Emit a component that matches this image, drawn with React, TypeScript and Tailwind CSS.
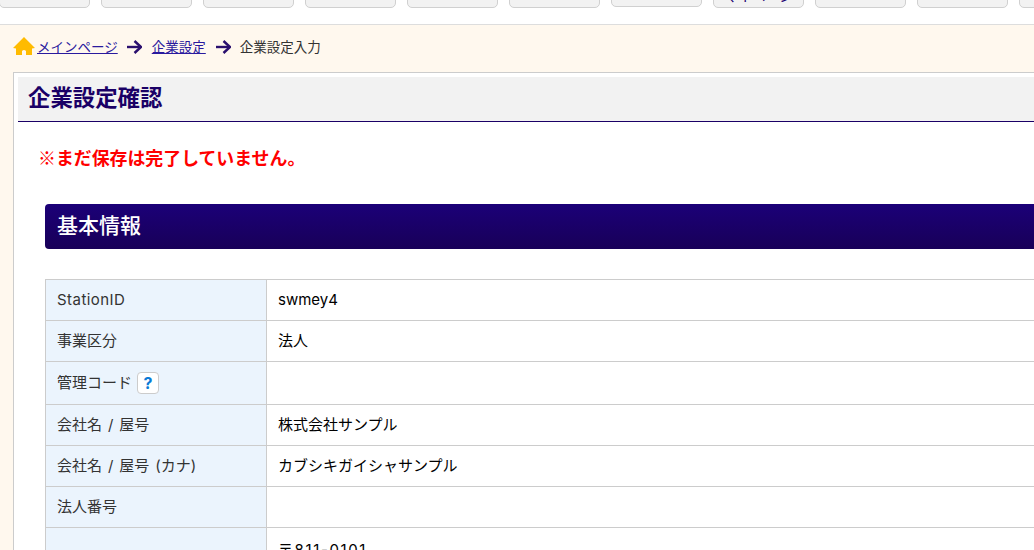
const fontStack = 'font-["Inter","Noto_Sans_CJK_JP",sans-serif]';

const navLabels = ['', '', '', '', '', '', '', 'マイページ', '', '', ''];

const rows: { label: string; value: string; help?: boolean; tall?: boolean }[] = [
  { label: 'StationID', value: 'swmey4' },
  { label: '事業区分', value: '法人' },
  { label: '管理コード', value: '', help: true, tall: true },
  { label: '会社名 / 屋号', value: '株式会社サンプル' },
  { label: '会社名 / 屋号 (カナ)', value: 'カブシキガイシャサンプル' },
  { label: '法人番号', value: '' },
];

function HomeIcon() {
  return (
    <svg width="22" height="18" viewBox="0 0 22 18" className="mb-[2px] shrink-0">
      <path d="M11 0 L22 11 L19 11.5 L19 18 L13 18 L13 14 Q11 12 9 14 L9 18 L3 18 L3 11.5 L0 11 Z" fill="#ffbb00" />
    </svg>
  );
}

function Arrow() {
  return (
    <svg width="15" height="14" viewBox="0 0 15 14" className="shrink-0" fill="none" stroke="#2a0f6e" strokeWidth="2.4">
      <path d="M0 7 H13" />
      <path d="M7.5 1 L14 7 L7.5 13" />
    </svg>
  );
}

export default function App() {
  return (
    <div className={`h-[550px] w-[1034px] overflow-hidden bg-white ${fontStack}`}>
      {/* top nav, buttons are cut by the window */}
      <div className="flex h-[25px] items-end gap-[11px] overflow-hidden border-b border-[#dddddd] pb-[16px]">
        {navLabels.map((label, i) => (
          <div
            key={i}
            className={`flex h-[40px] w-[91px] shrink-0 items-end justify-center rounded-[5px] border border-[#d0d0d0] bg-[#f2f2f2] pb-[4px] text-[14px] leading-[14px] text-[#1a0070] ${i === 0 ? '-ml-[1px]' : ''} ${i === 6 ? 'mb-[1px]' : ''}`}
          >
            {label}
          </div>
        ))}
      </div>

      {/* breadcrumb */}
      <div className="flex h-[47px] items-center bg-[#fff8ee] pb-[3px] pl-[13px] text-[13.5px]">
        <HomeIcon />
        <a className="ml-[2px] text-[#2a1a9e] underline">メインページ</a>
        <span className="ml-[9px]"><Arrow /></span>
        <a className="ml-[10px] text-[#2a1a9e] underline">企業設定</a>
        <span className="ml-[10px]"><Arrow /></span>
        <span className="ml-[9px] text-[#333333]">企業設定入力</span>
      </div>

      {/* main box */}
      <div className="bg-[#fff8ee] pl-[13px]">
        <div className="border-l border-t border-[#cccccc] bg-white pl-[4px] pt-[4px]">
          <h1 className="flex h-[45px] items-center border-b border-[#1a0066] bg-[#f2f2f2] pb-[2px] pl-[10px] text-[22.4px] font-bold text-[#1a0066]">
            企業設定確認
          </h1>

          <p className='ml-[20px] mt-[23px] font-["Noto_Sans_CJK_JP",sans-serif] text-[17.9px] font-bold leading-[24px] text-[#ff0000]'>
            ※まだ保存は完了していません。
          </p>

          <div className="ml-[27px] mt-[35px]">
            <h2 className="flex h-[45px] items-center rounded-l-[4px] bg-gradient-to-b from-[#1b0078] to-[#180058] pb-[1px] pl-[12px] text-[21px] font-medium text-white">
              基本情報
            </h2>

            <table className="mt-[30px] w-full border-collapse text-[15px]">
              <colgroup>
                <col className="w-[221px]" />
                <col />
              </colgroup>
              <tbody>
                {rows.map((row) => (
                  <tr key={row.label} className={row.tall ? 'h-[43px]' : 'h-[41px]'}>
                    <th className={`border border-[#cccccc] bg-[#ebf4fd] pl-[11px] text-left font-normal text-[#333333] [word-spacing:1.7px] ${row.label === 'StationID' ? 'tracking-[0.45px]' : ''}`}>
                      <span className="flex items-center">
                        {row.label}
                        {row.help && (
                          <span className="ml-[5px] flex h-[22px] w-[22px] items-center justify-center rounded-[4px] border border-[#cccccc] bg-white text-[16px] font-bold text-[#0a7ad6]">
                            ?
                          </span>
                        )}
                      </span>
                    </th>
                    <td className="border-y border-l border-[#cccccc] pl-[11px] text-black">{row.value}</td>
                  </tr>
                ))}
                <tr className="h-[60px]">
                  <th className="border border-[#cccccc] bg-[#ebf4fd]" />
                  <td className="border-y border-l border-[#cccccc] pl-[11px] pt-[12px] align-top leading-[20px] tracking-[1.6px] text-black">〒811-0101</td>
                </tr>
              </tbody>
            </table>
          </div>
        </div>
      </div>
    </div>
  );
}
